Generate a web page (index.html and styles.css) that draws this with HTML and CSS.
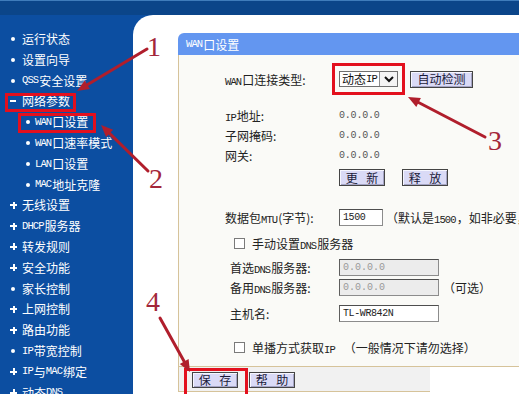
FILE: index.html
```html
<!DOCTYPE html>
<html lang="zh">
<head>
<meta charset="utf-8">
<title>WAN口设置</title>
<link rel="stylesheet" href="styles.css">
</head>
<body>
<div class="page">
  <div class="topbar"></div>
  <div class="main">
    <nav class="sidebar">
      <div class="item"><span class="mk dot"></span>运行状态</div>
      <div class="item"><span class="mk dot"></span>设置向导</div>
      <div class="item"><span class="mk dot"></span><span class="lat">QSS</span>安全设置</div>
      <div class="item"><span class="mk minus"></span>网络参数</div>
      <div class="item sub"><span class="mk dot"></span><span class="lat">WAN</span>口设置</div>
      <div class="item sub"><span class="mk dot"></span><span class="lat">WAN</span>口速率模式</div>
      <div class="item sub"><span class="mk dot"></span><span class="lat">LAN</span>口设置</div>
      <div class="item sub"><span class="mk dot"></span><span class="lat">MAC</span>地址克隆</div>
      <div class="item"><span class="mk plus"></span>无线设置</div>
      <div class="item"><span class="mk plus"></span><span class="lat">DHCP</span>服务器</div>
      <div class="item"><span class="mk plus"></span>转发规则</div>
      <div class="item"><span class="mk plus"></span>安全功能</div>
      <div class="item"><span class="mk dot"></span>家长控制</div>
      <div class="item"><span class="mk plus"></span>上网控制</div>
      <div class="item"><span class="mk plus"></span>路由功能</div>
      <div class="item"><span class="mk dot"></span><span class="lat">IP</span>带宽控制</div>
      <div class="item"><span class="mk plus"></span><span class="lat">IP</span>与<span class="lat">MAC</span>绑定</div>
      <div class="item"><span class="mk plus"></span>动态<span class="lat">DNS</span></div>
    </nav>
    <section class="content">
      <div class="panel">
        <div class="panel-head"><span class="lat">WAN</span>口设置</div>
        <div class="panel-body">
          <div class="row r-type">
            <div class="label"><span class="lat">WAN</span>口连接类型:</div>
            <div class="select"><span class="sel-text">动态<span class="lat">IP</span></span><span class="sel-btn"><svg width="12" height="10" viewBox="0 0 12 10"><polyline points="2,3 6,7 10,3" fill="none" stroke="#111" stroke-width="2"/></svg></span></div>
            <div class="btn btn-detect">自动检测</div>
          </div>
          <div class="row r-ip">
            <div class="label"><span class="lat">IP</span>地址:</div>
            <div class="val">0.0.0.0</div>
          </div>
          <div class="row">
            <div class="label">子网掩码:</div>
            <div class="val">0.0.0.0</div>
          </div>
          <div class="row">
            <div class="label">网关:</div>
            <div class="val">0.0.0.0</div>
          </div>
          <div class="row r-btns">
            <div class="label"></div>
            <div class="btn btn-sm">更 新</div>
            <div class="btn btn-sm btn-gap">释 放</div>
          </div>
          <div class="row r-mtu">
            <div class="label">数据包<span class="lat">MTU</span>(字节):</div>
            <div class="input input-mtu">1500</div>
            <div class="hint">（默认是<span class="lat">1500</span>，如非必要，请勿修改）</div>
          </div>
          <div class="row r-chk">
            <span class="chk"></span>
            <span>手动设置<span class="lat">DNS</span>服务器</span>
          </div>
          <div class="row r-dns1">
            <div class="label ind">首选<span class="lat">DNS</span>服务器:</div>
            <div class="input disabled">0.0.0.0</div>
          </div>
          <div class="row">
            <div class="label ind">备用<span class="lat">DNS</span>服务器:</div>
            <div class="input disabled">0.0.0.0</div>
            <div class="opt">（可选）</div>
          </div>
          <div class="row r-host">
            <div class="label ind">主机名:</div>
            <div class="input">TL-WR842N</div>
          </div>
          <div class="row r-chk2">
            <span class="chk"></span>
            <span>单播方式获取<span class="lat">IP</span><span class="gapx"></span>（一般情况下请勿选择）</span>
          </div>
        </div>
        <div class="bar">
          <div class="btn btn-sm">保 存</div>
          <div class="btn btn-sm">帮 助</div>
        </div>
      </div>
    </section>
  </div>

  <div class="redbox box-a"></div>
  <div class="redbox box-b"></div>
  <div class="redbox box-c"></div>
  <div class="redbox box-d"></div>

  <svg class="arrows" width="519" height="394" viewBox="0 0 519 394">
    <g stroke="#b01e2c" stroke-width="3" stroke-linecap="round" fill="none">
      <line x1="147" y1="49" x2="87.3" y2="84.8"/>
      <line x1="148" y1="171" x2="109.6" y2="133.4"/>
      <line x1="485" y1="137" x2="418.6" y2="102.5"/>
      <line x1="160" y1="318" x2="184.2" y2="361.5"/>
    </g>
    <g fill="#b01e2c">
      <polygon points="77,91 89.9,89.1 84.7,80.5"/>
      <polygon points="101,125 113.1,129.8 106.1,137"/>
      <polygon points="408,97 420.9,98.1 416.3,106.9"/>
      <polygon points="190,372 188.6,359.1 179.8,363.9"/>
    </g>
  </svg>

  <div class="num n1">1</div>
  <div class="num n2">2</div>
  <div class="num n3">3</div>
  <div class="num n4">4</div>
</div>
</body>
</html>
```

FILE: styles.css
```css
* { box-sizing: border-box; margin: 0; padding: 0; }
html, body { width: 519px; height: 394px; overflow: hidden; background: #fff; }
body {
  font-family: "Noto Sans CJK SC", "Noto Sans", sans-serif;
  font-size: 12px;
  color: #222;
}
.lat {
  font-family: "Liberation Mono", "DejaVu Sans Mono", monospace;
  font-size: 10.5px;
  letter-spacing: -0.9px;
  margin-right: 1px;
}

.page {
  position: relative;
  width: 519px;
  height: 394px;
  display: flex;
  flex-direction: column;
  background: #0c4ea1;
  overflow: hidden;
}
.topbar {
  height: 15px;
  flex: none;
  background: #0b4589;
  border-top: 1px solid #3f7cbb;
}
.main { flex: 1; display: flex; min-height: 0; }

/* sidebar */
.sidebar {
  width: 133px;
  flex: none;
  padding-top: 13.6px;
  color: #fff;
}
.item {
  height: 20.8px;
  display: flex;
  align-items: center;
  padding-left: 9px;
  white-space: nowrap;
  line-height: 1;
}
.item.sub { padding-left: 24px; }
.mk { width: 13px; height: 10px; flex: none; position: relative; }
.item.sub .mk { width: 11px; }
.mk.dot::before {
  content: "";
  position: absolute;
  left: 2px; top: 3px;
  width: 4px; height: 4px;
  border-radius: 50%;
  background: #fff;
}
.mk.plus {
  background:
    linear-gradient(#fff, #fff) 1px 4px / 7px 2px no-repeat,
    linear-gradient(#fff, #fff) 3.5px 1.5px / 2px 7px no-repeat;
}
.mk.minus {
  background: linear-gradient(#fff, #fff) 1px 4px / 6px 2px no-repeat;
}

/* content */
.content {
  flex: 1;
  background: #fff;
  border-top-left-radius: 20px;
  padding: 18px 0 0 45px;
  overflow: hidden;
}
.panel { width: 430px; }
.panel-head {
  height: 22px;
  background: #6396f0;
  border-top-left-radius: 6px;
  color: #fff;
  padding-left: 8px;
  display: flex;
  align-items: center;
  font-size: 12px;
  white-space: nowrap;
}
.panel-body {
  height: 312px;
  background: #fafaf7;
  border-left: 1px solid #d6c39a;
  border-bottom: 1px solid #d6c39a;
  padding: 8px 0 0 46px;
}
.row {
  height: 20px;
  display: flex;
  align-items: center;
  white-space: nowrap;
}
.r-type { height: 32px; }
.r-ip { margin-top: 10px; }
.r-btns { margin-top: 3px; height: 19px; }
.r-mtu { margin-top: 20px; }
.r-chk { margin-top: 6px; }
.r-dns1 { margin-top: 4px; }
.r-host { margin-top: 6px; }
.r-chk2 { margin-top: 14px; }

.label { width: 114px; flex: none; }
.label.ind { padding-left: 5px; }
.val {
  font-family: "Liberation Mono", monospace;
  font-size: 10px;
  color: #555;
  letter-spacing: -0.2px;
}

.select {
  width: 59px;
  height: 16px;
  display: flex;
  align-items: stretch;
  border: 1px solid #6f6f6f;
  background: #fff;
  flex: none;
}
.sel-text {
  flex: 1;
  padding-left: 2px;
  display: flex;
  align-items: center;
  line-height: 1;
  color: #111;
}
.sel-btn {
  width: 18px;
  display: flex;
  align-items: center;
  justify-content: center;
  border-left: 1px solid #8d8d8d;
  background: #f4f4f4;
}

.btn {
  height: 17px;
  display: flex;
  align-items: center;
  justify-content: center;
  background: #dadaf6;
  border: 1px solid #444;
  box-shadow: inset 1px 1px 0 #f6f6ff, inset -1px -1px 0 #a4a4c4;
  color: #1a1a3a;
  line-height: 1;
  flex: none;
  white-space: nowrap;
}
.btn-detect { width: 63px; margin-left: 12px; }
.btn-sm { width: 46px; letter-spacing: 3px; padding-left: 3px; }
.btn-gap { margin-left: 17px; }

.input {
  width: 100px;
  height: 17px;
  flex: none;
  background: #fff;
  border: 1px solid #8c8c8c;
  border-top-color: #4e4e4e;
  border-left-color: #5e5e5e;
  padding-left: 3px;
  display: flex;
  align-items: center;
  font-family: "Liberation Mono", monospace;
  font-size: 10px;
  letter-spacing: -0.4px;
  color: #222;
}
.input.disabled { background: #ececec; color: #9a9a9a; letter-spacing: 0; }
.input-mtu { width: 44px; }
.hint { margin-left: 3px; }
.opt { margin-left: 4px; }

.chk {
  width: 11px;
  height: 11px;
  flex: none;
  background: #fff;
  border: 1px solid #7a7a7a;
  margin-left: 9px;
  margin-right: 7px;
}
.gapx { display: inline-block; width: 8px; }

.bar {
  width: 252px;
  height: 25px;
  background: #f1f1f1;
  border-left: 1px solid #d6c39a;
  border-bottom: 1px solid #d6c39a;
  padding: 5px 0 0 13px;
  display: flex;
  gap: 11px;
}
.bar .btn { height: 16px; }

/* annotations */
.redbox {
  position: absolute;
  border: 3px solid #e3101e;
}
.box-a { left: 5px; top: 93px; width: 71px; height: 19px; }
.box-b { left: 18px; top: 113px; width: 78px; height: 20px; }
.box-c { left: 332px; top: 63px; width: 73px; height: 32px; }
.box-d { left: 184px; top: 368px; width: 64px; height: 30px; }

.arrows { position: absolute; left: 0; top: 0; pointer-events: none; }

.num {
  position: absolute;
  font-family: "Liberation Serif", serif;
  font-size: 28px;
  line-height: 28px;
  color: #a3263a;
}
.n1 { left: 147px; top: 33px; }
.n2 { left: 149px; top: 165px; }
.n3 { left: 488px; top: 127px; }
.n4 { left: 146px; top: 288px; }
```
